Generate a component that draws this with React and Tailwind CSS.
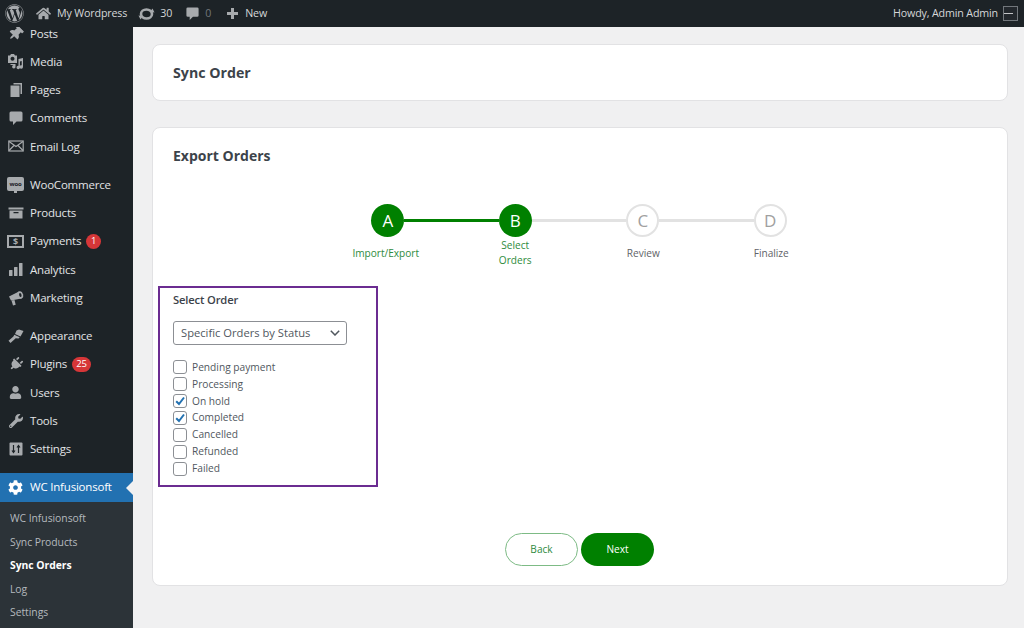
import React from 'react';
import { FaWordpress, FaThumbtack, FaPlug, FaUser, FaWrench, FaCog, FaHome } from 'react-icons/fa';

const PinIcon = () => <FaThumbtack size={15} className="rotate-45" />;

const MediaIcon = () => (
  <svg width="17" height="17" viewBox="0 0 17 17" fill="currentColor">
    <path d="M1 2.500h2l1-1.500h3l1 1.500h2V10H1zM5.500 3.800a2 2 0 1 0 .01 0z" fillRule="evenodd" />
    <path d="M11.500 6l4.500-1v9a1.700 1.700 0 1 1-1.300-1.700V8l-1.800.4v6.100a1.700 1.700 0 1 1-1.400-1.700z" />
    <path d="M3.500 11h5v2.500a1.700 1.700 0 1 1-1.300-1.400H3.500z" />
  </svg>
);

const PagesIcon = () => (
  <svg width="16" height="16" viewBox="0 0 16 16" fill="currentColor">
    <path d="M5.500 1H14v11h-1.500V2.500H5.500z" />
    <path d="M2.500 3.500H11.500V15H2.500z" />
  </svg>
);

const CommentIcon = ({ size = 16 }) => (
  <svg width={size} height={size} viewBox="0 0 16 16" fill="currentColor">
    <path d="M3 1.500h10a1.500 1.500 0 0 1 1.500 1.500v7a1.500 1.500 0 0 1-1.500 1.500H8.500L5 15v-3.500H3A1.500 1.500 0 0 1 1.500 10V3A1.500 1.500 0 0 1 3 1.500z" />
  </svg>
);

const MailIcon = () => (
  <svg width="16" height="16" viewBox="0 0 16 16" fill="none" stroke="currentColor" strokeWidth="1.200">
    <rect x="0.800" y="3" width="14.400" height="10" />
    <path d="M1 3.500l7 5 7-5M1 12.500l5-5M15 12.500l-5-5" />
  </svg>
);

const WooIcon = () => (
  <div className="relative flex h-[14px] w-[17px] items-center justify-center rounded-[2px] bg-[#a7aaad]">
    <span className="text-[6px] font-bold leading-none text-[#1d2327]">woo</span>
    <span className="absolute -bottom-[2px] left-[7px] h-[3px] w-[3px] bg-[#a7aaad]" />
  </div>
);

const ProductsIcon = () => (
  <svg width="16" height="16" viewBox="0 0 16 16" fill="currentColor">
    <path d="M0.500 2.500h15v2h-15z" />
    <path d="M1.500 5.500h13v8h-13zM5.500 7v1.200h5V7z" fillRule="evenodd" />
  </svg>
);

const PaymentsIcon = () => (
  <div className="flex h-[13px] w-[17px] items-center justify-center border-2 border-[#a7aaad] text-[9px] font-bold leading-none text-[#a7aaad]">
    $
  </div>
);

const BarsIcon = () => (
  <svg width="15" height="15" viewBox="0 0 15 15" fill="currentColor">
    <rect x="1" y="8" width="3.500" height="6" rx="0.500" />
    <rect x="6" y="5" width="3.500" height="9" rx="0.500" />
    <rect x="11" y="1" width="3.500" height="13" rx="0.500" />
  </svg>
);

const MegaphoneIcon = () => (
  <svg width="16" height="16" viewBox="0 0 16 16" fill="currentColor">
    <path d="M1 6.500L11 1.500 13.500 8.500 3 10.500z" />
    <ellipse cx="12.300" cy="5" rx="2.800" ry="3.800" transform="rotate(-15 12.300 5)" />
    <ellipse cx="12.300" cy="5" rx="1.200" ry="2" transform="rotate(-15 12.300 5)" fill="#1d2327" />
    <path d="M3.500 10.500l3-.5 1.200 4.800-2.700.7z" />
  </svg>
);

const BrushIcon = () => (
  <svg width="16" height="16" viewBox="0 0 16 16" fill="currentColor">
    <path d="M8.500 2.500L11 1.500 15.500 3 12.500 8.500 7 6z" />
    <path d="M6.300 6.800l5.400 2.500-1.200 1.200-2.800-.3-5.200 4.800-2-2.300 4.900-4.200z" />
  </svg>
);

const SettingsIcon = () => (
  <svg width="14" height="14" viewBox="0 0 14 14">
    <rect x="0.500" y="0.500" width="13" height="13" rx="1" fill="#a7aaad" />
    <path d="M4.500 3v7M3 8.500L4.500 10.500 6 8.500M9.500 11V4M8 5.500L9.500 3.500 11 5.500" stroke="#1d2327" strokeWidth="1.200" fill="none" />
  </svg>
);

const SyncIcon = () => (
  <svg width="17" height="14" viewBox="0 0 17 14" fill="none" stroke="currentColor">
    <ellipse cx="8.500" cy="7" rx="5.500" ry="4.500" strokeWidth="2.600" />
    <path d="M12 5L16.500 5.500 14.500 1.500zM5 9L0.500 8.500 2.500 12.500z" fill="currentColor" stroke="none" />
  </svg>
);

const CheckIcon = () => (
  <svg width="12" height="12" viewBox="0 0 12 12" fill="none" stroke="#2271b1" strokeWidth="2">
    <path d="M2.200 6.200L5 9 10 2.500" />
  </svg>
);

const menuGroups = [
  [
    { label: 'Posts', icon: <PinIcon /> },
    { label: 'Media', icon: <MediaIcon /> },
    { label: 'Pages', icon: <PagesIcon /> },
    { label: 'Comments', icon: <CommentIcon /> },
    { label: 'Email Log', icon: <MailIcon /> },
  ],
  [
    { label: 'WooCommerce', icon: <WooIcon /> },
    { label: 'Products', icon: <ProductsIcon /> },
    { label: 'Payments', icon: <PaymentsIcon />, badge: '1' },
    { label: 'Analytics', icon: <BarsIcon /> },
    { label: 'Marketing', icon: <MegaphoneIcon /> },
  ],
  [
    { label: 'Appearance', icon: <BrushIcon /> },
    { label: 'Plugins', icon: <FaPlug size={14} className="rotate-45" />, badge: '25' },
    { label: 'Users', icon: <FaUser size={13} /> },
    { label: 'Tools', icon: <FaWrench size={14} /> },
    { label: 'Settings', icon: <SettingsIcon /> },
  ],
];

const subMenu = ['WC Infusionsoft', 'Sync Products', 'Sync Orders', 'Log', 'Settings'];

const steps = [
  { letter: 'A', label: 'Import/Export', done: true, labelClass: 'mr-[4px]' },
  { letter: 'B', label: 'Select Orders', done: true, labelClass: '' },
  { letter: 'C', label: 'Review', labelClass: 'ml-[1px]' },
  { letter: 'D', label: 'Finalize', labelClass: 'ml-[2px]' },
];

const orderStatuses = [
  { label: 'Pending payment' },
  { label: 'Processing' },
  { label: 'On hold', checked: true },
  { label: 'Completed', checked: true },
  { label: 'Cancelled' },
  { label: 'Refunded' },
  { label: 'Failed' },
];

const TopBar = () => (
  <div className="flex h-[27px] shrink-0 items-center justify-between bg-[#1d2327] pl-[5px] pr-[6px] text-[10.700px] tracking-[-0.150px] text-[#d5d7d9]">
    <div className="flex items-center">
      <FaWordpress size={19} className="text-[#a7aaad]" />
      <FaHome size={15} className="ml-[12px] text-[#a7aaad]" />
      <span className="ml-[6px]">My Wordpress</span>
      <span className="ml-[11px] text-[#a7aaad]"><SyncIcon /></span>
      <span className="ml-[5px]">30</span>
      <span className="ml-[13px] text-[#a7aaad]"><CommentIcon size={15} /></span>
      <span className="ml-[5px] text-[#72777c]">0</span>
      <svg className="ml-[15px] text-[#a7aaad]" width="13" height="13" viewBox="0 0 13 13" fill="currentColor">
        <path d="M5 1h3v4h4v3H8v4H5V8H1V5h4z" />
      </svg>
      <span className="ml-[6px]">New</span>
    </div>
    <div className="flex items-center gap-[5px]">
      <span>Howdy, Admin Admin</span>
      <div className="flex h-[15px] w-[15px] items-center border border-[#72777c] bg-[#23282d]">
        <div className="h-px w-[9px] bg-[#c3c4c7]" />
      </div>
    </div>
  </div>
);

const Sidebar = () => (
  <aside className="w-[133px] shrink-0 overflow-hidden bg-[#1d2327] text-[11.500px] tracking-[-0.200px] text-[#e2e4e6]">
    <div className="-mt-[8px]">
      {menuGroups.map((group, i) => (
        <div key={i} className="mb-[9.800px]">
          {group.map((item) => (
            <div key={item.label} className="flex h-[28.300px] items-center">
              <div className="flex w-[30px] justify-center pl-[1px] text-[#a7aaad]">{item.icon}</div>
              <span>{item.label}</span>
              {item.badge && (
                <span className="ml-[5px] flex h-[15px] min-w-[15px] items-center justify-center rounded-full bg-[#d63638] px-[4px] text-[9.500px] text-white">
                  {item.badge}
                </span>
              )}
            </div>
          ))}
        </div>
      ))}
    </div>
    <div className="relative mt-[0.600px] flex h-[29.500px] items-center bg-[#2271b1] pb-[1px] text-white">
      <div className="flex w-[30px] justify-center"><FaCog size={15} /></div>
      <span>WC Infusionsoft</span>
      <span className="absolute right-0 top-[8px] h-0 w-0 border-y-[7px] border-r-[7px] border-y-transparent border-r-[#f0f0f1]" />
    </div>
    <div className="h-full bg-[#2c3338] pt-[5px] text-[10.400px] tracking-[-0.050px] text-[#b4b9be]">
      {subMenu.map((name) => (
        <div
          key={name}
          className={`flex h-[23.500px] items-center pl-[10px] ${name === 'Sync Orders' ? 'font-bold text-white' : ''}`}
        >
          {name}
        </div>
      ))}
    </div>
  </aside>
);

const Stepper = () => (
  <div className="flex flex-col items-center pr-[2px]">
    <div className="flex items-center">
      {steps.map((step, i) => (
        <React.Fragment key={step.letter}>
          {i > 0 && <div className={`h-[3px] w-[94.500px] ${step.done ? 'bg-[#008000]' : 'bg-[#e2e2e2]'}`} />}
          <div
            className={`flex h-[33px] w-[33px] items-center justify-center rounded-full text-[17px] ${
              step.done ? 'bg-[#008000] text-white' : 'border-2 border-[#e2e2e2] bg-white text-[#a0a0a0]'
            }`}
          >
            {step.letter}
          </div>
        </React.Fragment>
      ))}
    </div>
    <div className="mt-[1px] flex h-[30px] items-center">
      {steps.map((step) => (
        <div key={step.letter} className="flex w-[127.500px] justify-center">
          <span
            className={`w-[70px] text-center text-[10.100px] leading-[15px] ${step.labelClass} ${step.done ? 'text-[#2e8b3d]' : 'text-[#5f6368]'}`}
          >
            {step.letter === 'B' ? <>Select<br />Orders</> : step.label}
          </span>
        </div>
      ))}
    </div>
  </div>
);

const OrderBox = () => (
  <div className="ml-[5px] mt-[18px] h-[201px] w-[220px] border-2 border-[#6b2c91] pl-[13px] pt-[3px] text-[#50575e]">
    <div className="text-[11.200px] font-semibold leading-[18px] tracking-[-0.150px] text-[#3c434a]">Select Order</div>
    <div className="mt-[12px] flex h-[24px] w-[174px] items-center justify-between rounded-[3px] border border-[#8c8f94] pl-[7px] pr-[6px] text-[11.200px]">
      <span>Specific Orders by Status</span>
      <svg width="10" height="6" viewBox="0 0 10 6" fill="none" stroke="#50575e" strokeWidth="1.500">
        <path d="M0.800 0.800L5 5l4.200-4.200" />
      </svg>
    </div>
    <div className="mt-[14px]">
      {orderStatuses.map((status) => (
        <div key={status.label} className="flex h-[16.900px] items-center text-[10.200px]">
          <div className="flex h-[14px] w-[14px] items-center justify-center rounded-[3px] border border-[#8c8f94] bg-white">
            {status.checked && <CheckIcon />}
          </div>
          <span className="ml-[5px]">{status.label}</span>
        </div>
      ))}
    </div>
  </div>
);

const App = () => (
  <div className="flex h-[628px] w-[1024px] flex-col overflow-hidden bg-[#f0f0f1] font-['Open_Sans',sans-serif]">
    <TopBar />
    <div className="flex min-h-0 flex-1">
      <Sidebar />
      <main className="flex-1 pl-[19px] pr-[16px] pt-[17px]">
        <div className="flex h-[57px] items-center rounded-[8px] border border-[#e2e2e4] bg-white pl-[20px]">
          <h1 className="text-[14.200px] font-bold text-[#3c434a]">Sync Order</h1>
        </div>
        <div className="mt-[26px] h-[459px] rounded-[8px] border border-[#e2e2e4] bg-white">
          <h2 className="ml-[20px] mt-[18px] text-[14px] font-bold leading-[20px] text-[#3c434a]">Export Orders</h2>
          <div className="mt-[38px]">
            <Stepper />
          </div>
          <OrderBox />
          <div className="mt-[46px] flex justify-center gap-[3px] pr-[1px]">
            <button className="h-[33px] w-[73px] rounded-full border border-[#7dbb85] bg-white text-[10.100px] text-[#2e8b3d]">Back</button>
            <button className="h-[33px] w-[73px] rounded-full bg-[#008000] text-[10.100px] font-medium text-white">Next</button>
          </div>
        </div>
      </main>
    </div>
  </div>
);

export default App;
